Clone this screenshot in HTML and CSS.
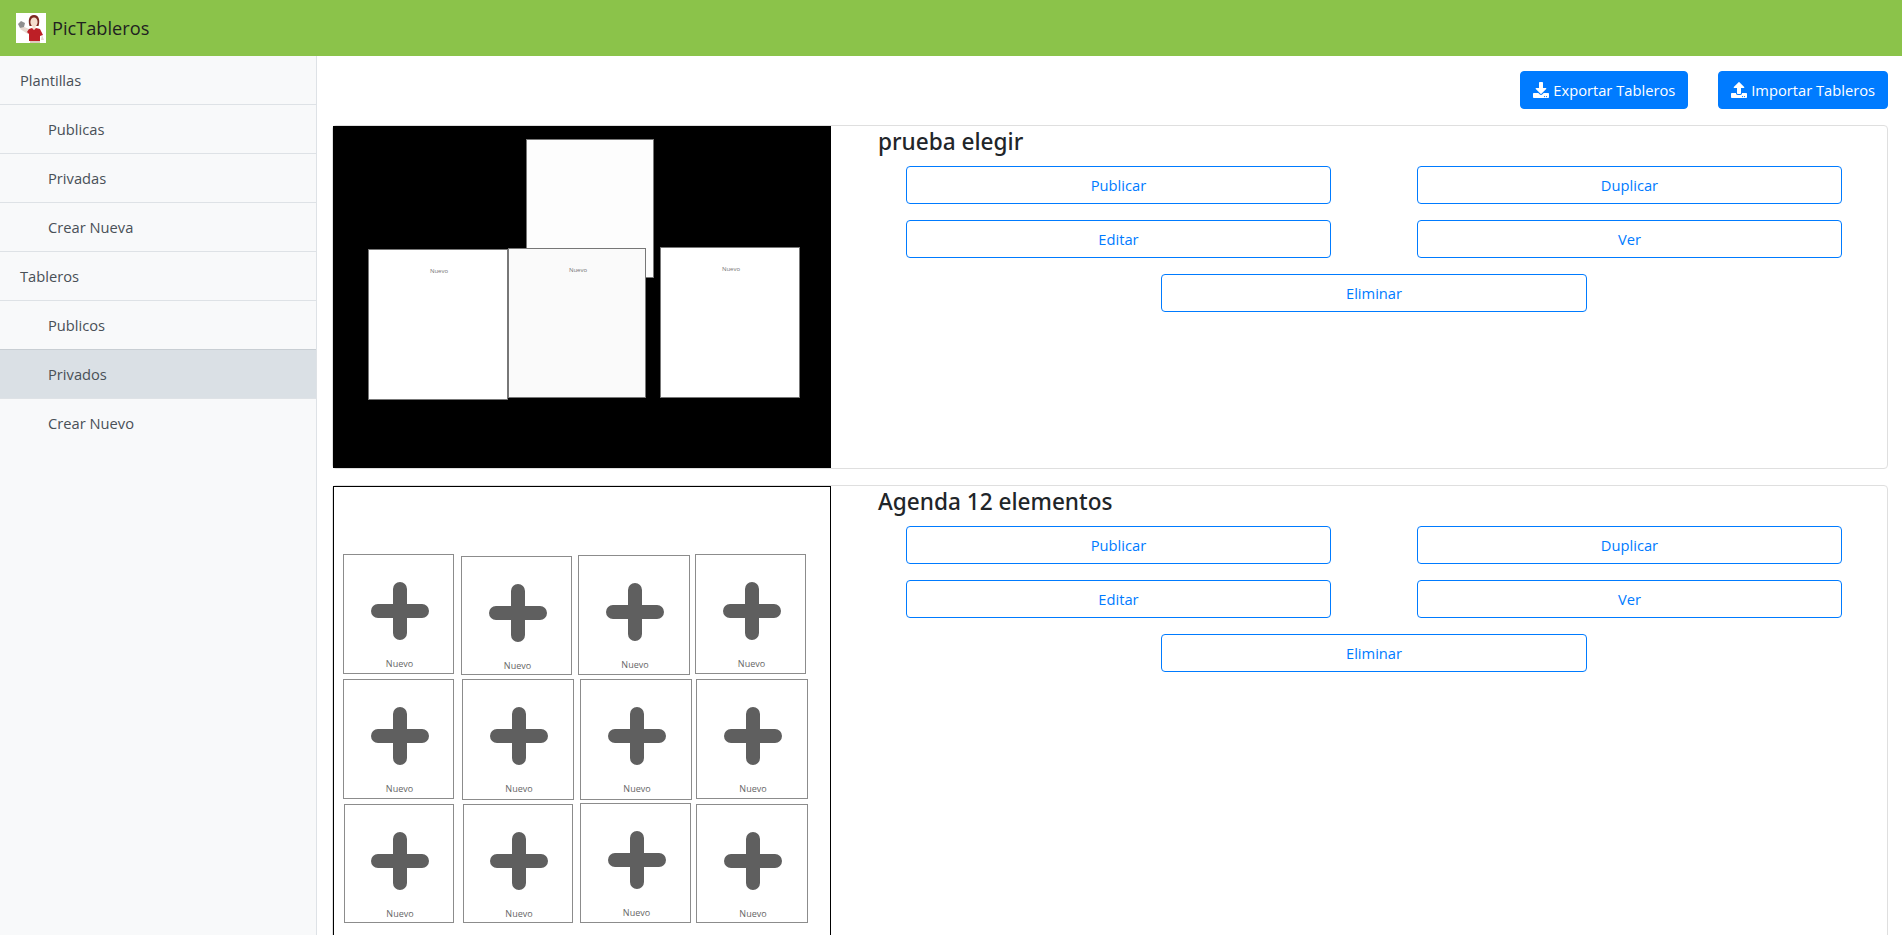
FILE: index.html
```html
<!DOCTYPE html>
<html lang="es">
<head>
<meta charset="UTF-8">
<title>PicTableros</title>
<link rel="stylesheet" href="styles.css">
</head>
<body>
<nav class="topbar">
	<span class="logo">
		<svg width="30" height="30" viewBox="0 0 30 30">
			<rect width="30" height="30" fill="#fff"/>
			<path d="M6 13l7 3 1 3-2 2-8-5z" fill="#e6d8cf"/>
			<path d="M2 11l3-3 4 2-1 4-4 1z" fill="#8f8f8f"/>
			<path d="M13.5 13c-1.500-5-1-11 4.500-11s6 6 4.500 11z" fill="#7c2a22"/>
			<ellipse cx="18" cy="9" rx="3.6" ry="4.6" fill="#f5ddce"/>
			<rect x="16.5" y="12" width="3" height="4" fill="#f5ddce"/>
			<path d="M13 16l3-1 2 2 2-2 4 1 3 6-3 1v5h-11v-7l-2-2z" fill="#bd1f26"/>
			<path d="M26 22l2 5h-3z" fill="#e6d8cf"/>
			<rect x="14" y="28" width="10" height="2" fill="#ddcabe"/>
		</svg>
	</span>
	<span class="brand">PicTableros</span>
</nav>

<div class="layout">
	<ul class="sidebar">
		<li class="side-item">Plantillas</li>
		<li class="side-item sub">Publicas</li>
		<li class="side-item sub">Privadas</li>
		<li class="side-item sub">Crear Nueva</li>
		<li class="side-item">Tableros</li>
		<li class="side-item sub">Publicos</li>
		<li class="side-item sub active">Privados</li>
		<li class="side-item sub">Crear Nuevo</li>
	</ul>

	<main class="content">
		<div class="toolbar">
			<button class="btn solid">
				<svg class="ico" viewBox="0 0 512 512"><path d="M216 0h80c13.3 0 24 10.7 24 24v168h87.7c17.8 0 26.7 21.5 14.1 34.1L269.7 378.3c-7.5 7.5-19.8 7.5-27.3 0L90.1 226.1c-12.6-12.6-3.7-34.1 14.1-34.1H192V24c0-13.3 10.7-24 24-24zm296 376v112c0 13.3-10.7 24-24 24H24c-13.3 0-24-10.7-24-24V376c0-13.3 10.7-24 24-24h146.7l49 49c20.1 20.1 52.5 20.1 72.6 0l49-49H488c13.3 0 24 10.7 24 24zm-124 88c0-11-9-20-20-20s-20 9-20 20 9 20 20 20 20-9 20-20zm64 0c0-11-9-20-20-20s-20 9-20 20 9 20 20 20 20-9 20-20z"/></svg>
				Exportar Tableros
			</button>
			<button class="btn solid">
				<svg class="ico" viewBox="0 0 512 512"><path d="M296 384h-80c-13.3 0-24-10.7-24-24V192h-87.7c-17.8 0-26.7-21.5-14.1-34.1L242.3 5.7c7.5-7.5 19.8-7.5 27.3 0l152.2 152.2c12.6 12.6 3.7 34.1-14.1 34.1H320v168c0 13.3-10.7 24-24 24zm216-8v112c0 13.3-10.7 24-24 24H24c-13.3 0-24-10.7-24-24V376c0-13.3 10.7-24 24-24h136v8c0 30.9 25.1 56 56 56h80c30.9 0 56-25.1 56-56v-8h136c13.3 0 24 10.7 24 24zm-124 88c0-11-9-20-20-20s-20 9-20 20 9 20 20 20 20-9 20-20zm64 0c0-11-9-20-20-20s-20 9-20 20 9 20 20 20 20-9 20-20z"/></svg>
				Importar Tableros
			</button>
		</div>

		<section class="card">
			<div class="thumb thumb-black">
				<div class="node n-back"></div>
				<div class="node n-a"><span>Nuevo</span></div>
				<div class="node n-b"><span>Nuevo</span></div>
				<div class="node n-c"><span>Nuevo</span></div>
			</div>
			<div class="card-body">
				<h4 class="card-title">prueba elegir</h4>
				<div class="actions">
					<button class="btn outline">Publicar</button>
					<button class="btn outline">Duplicar</button>
					<button class="btn outline">Editar</button>
					<button class="btn outline">Ver</button>
					<button class="btn outline wide">Eliminar</button>
				</div>
			</div>
		</section>

		<section class="card">
			<div class="thumb thumb-white">
				<div class="cell c11"><svg class="plus" viewBox="0 0 58 58"><path d="M29 7v44M7 29h44"/></svg><span>Nuevo</span></div>
				<div class="cell c12"><svg class="plus" viewBox="0 0 58 58"><path d="M29 7v44M7 29h44"/></svg><span>Nuevo</span></div>
				<div class="cell c13"><svg class="plus" viewBox="0 0 58 58"><path d="M29 7v44M7 29h44"/></svg><span>Nuevo</span></div>
				<div class="cell c14"><svg class="plus" viewBox="0 0 58 58"><path d="M29 7v44M7 29h44"/></svg><span>Nuevo</span></div>
				<div class="cell c21"><svg class="plus" viewBox="0 0 58 58"><path d="M29 7v44M7 29h44"/></svg><span>Nuevo</span></div>
				<div class="cell c22"><svg class="plus" viewBox="0 0 58 58"><path d="M29 7v44M7 29h44"/></svg><span>Nuevo</span></div>
				<div class="cell c23"><svg class="plus" viewBox="0 0 58 58"><path d="M29 7v44M7 29h44"/></svg><span>Nuevo</span></div>
				<div class="cell c24"><svg class="plus" viewBox="0 0 58 58"><path d="M29 7v44M7 29h44"/></svg><span>Nuevo</span></div>
				<div class="cell c31"><svg class="plus" viewBox="0 0 58 58"><path d="M29 7v44M7 29h44"/></svg><span>Nuevo</span></div>
				<div class="cell c32"><svg class="plus" viewBox="0 0 58 58"><path d="M29 7v44M7 29h44"/></svg><span>Nuevo</span></div>
				<div class="cell c33"><svg class="plus" viewBox="0 0 58 58"><path d="M29 7v44M7 29h44"/></svg><span>Nuevo</span></div>
				<div class="cell c34"><svg class="plus" viewBox="0 0 58 58"><path d="M29 7v44M7 29h44"/></svg><span>Nuevo</span></div>
			</div>
			<div class="card-body">
				<h4 class="card-title">Agenda 12 elementos</h4>
				<div class="actions">
					<button class="btn outline">Publicar</button>
					<button class="btn outline">Duplicar</button>
					<button class="btn outline">Editar</button>
					<button class="btn outline">Ver</button>
					<button class="btn outline wide">Eliminar</button>
				</div>
			</div>
		</section>
	</main>
</div>
</body>
</html>
```

FILE: styles.css
```css
* {margin:0; padding:0; box-sizing:border-box;}
li {list-style:none;}
html, body {height:100%; overflow:hidden;}
body {font-family:"Open Sans", "Liberation Sans", sans-serif; font-size:14.7px; color:#212529; background:#fff;}

.topbar {height:56px; background:#8bc34a; display:flex; align-items:center; padding-left:16px;}
.logo {width:30px; height:30px; display:block;}
.brand {font-size:18.2px; margin-left:6px; color:#212121;}

.layout {display:flex; height:879px;}
.sidebar {width:317px; flex:none; background:#f8f9fa; border-right:1px solid #dee2e6;}
.side-item {height:49px; line-height:48px; padding-left:20px; color:#495057; border-bottom:1px solid #dee2e6;}
.side-item.sub {padding-left:48px;}
.side-item.active {background:#dae0e5; border-top:1px solid #c8ced3; margin-top:-1px; height:50px;}
.side-item:last-child {border-bottom:0;}

.content {flex:1; padding:15px 14px 0 15px; overflow:hidden;}
.toolbar {display:flex; justify-content:flex-end; gap:30px; margin-bottom:16px;}

.btn {height:38px; font:inherit; border-radius:4px; border:1px solid #007bff; cursor:pointer;}
.btn.solid {background:#007bff; color:#fff; padding:0 12px; display:flex; align-items:center; gap:4px;}
.btn.outline {background:#fff; color:#007bff;}
.ico {width:16px; height:16px; fill:#fff;}

.card {display:flex; border:1px solid #dfdfdf; border-radius:4px; margin-bottom:16px;}
.card-body {flex:1; padding-left:47px;}
.card-title {font-family:"Noto Sans", "Open Sans", sans-serif; font-size:22.6px; font-weight:500; line-height:32px; height:40px; color:#212529;}
.actions {display:grid; grid-template-columns:425px 425px; column-gap:86px; row-gap:16px; margin-left:-17px; justify-content:center;}
.actions .wide {grid-column:1 / -1; justify-self:center; width:426px;}

/* las miniaturas son un lienzo libre, cada pieza va donde la dejo el usuario */
.thumb {width:498px; flex:none; position:relative;}
.thumb-black {height:342px; background:#000;}
.thumb-white {height:480px; background:#fff; border:1px solid #000; border-bottom:0;}

.node {position:absolute; background:#fff; border:1px solid #777; text-align:center; font-size:6px; line-height:8px; color:#777; padding-left:2px;}
.node span {display:block; margin-top:17px;}
.n-back {left:193px; top:13px; width:128px; height:139px; background:#fdfdfd;}
.n-a {left:35px; top:123px; width:140px; height:151px;}
.n-b {left:175px; top:122px; width:138px; height:150px; background:#fafafa;}
.n-c {left:327px; top:121px; width:140px; height:151px;}

.cell {position:absolute; background:#fff; border:1px solid #8c8c8c; display:flex; flex-direction:column; align-items:center; padding:27px 0 0 2px; font-size:9px; line-height:12px; color:#666;}
.cell span {margin-top:18px;}
.plus {width:58px; height:58px; flex:none; fill:none; stroke:#5f5f5f; stroke-width:14; stroke-linecap:round;}

.c11 {left:9px; top:67px; width:111px; height:120px;}
.c12 {left:127px; top:69px; width:111px; height:119px;}
.c13 {left:244px; top:68px; width:112px; height:120px;}
.c14 {left:361px; top:67px; width:111px; height:120px;}
.c21 {left:9px; top:192px; width:111px; height:120px;}
.c22 {left:128px; top:192px; width:112px; height:121px;}
.c23 {left:246px; top:192px; width:112px; height:121px;}
.c24 {left:362px; top:192px; width:112px; height:120px;}
.c31 {left:10px; top:317px; width:110px; height:119px;}
.c32 {left:129px; top:317px; width:110px; height:119px;}
.c33 {left:246px; top:316px; width:111px; height:120px;}
.c34 {left:362px; top:317px; width:112px; height:119px;}
```
